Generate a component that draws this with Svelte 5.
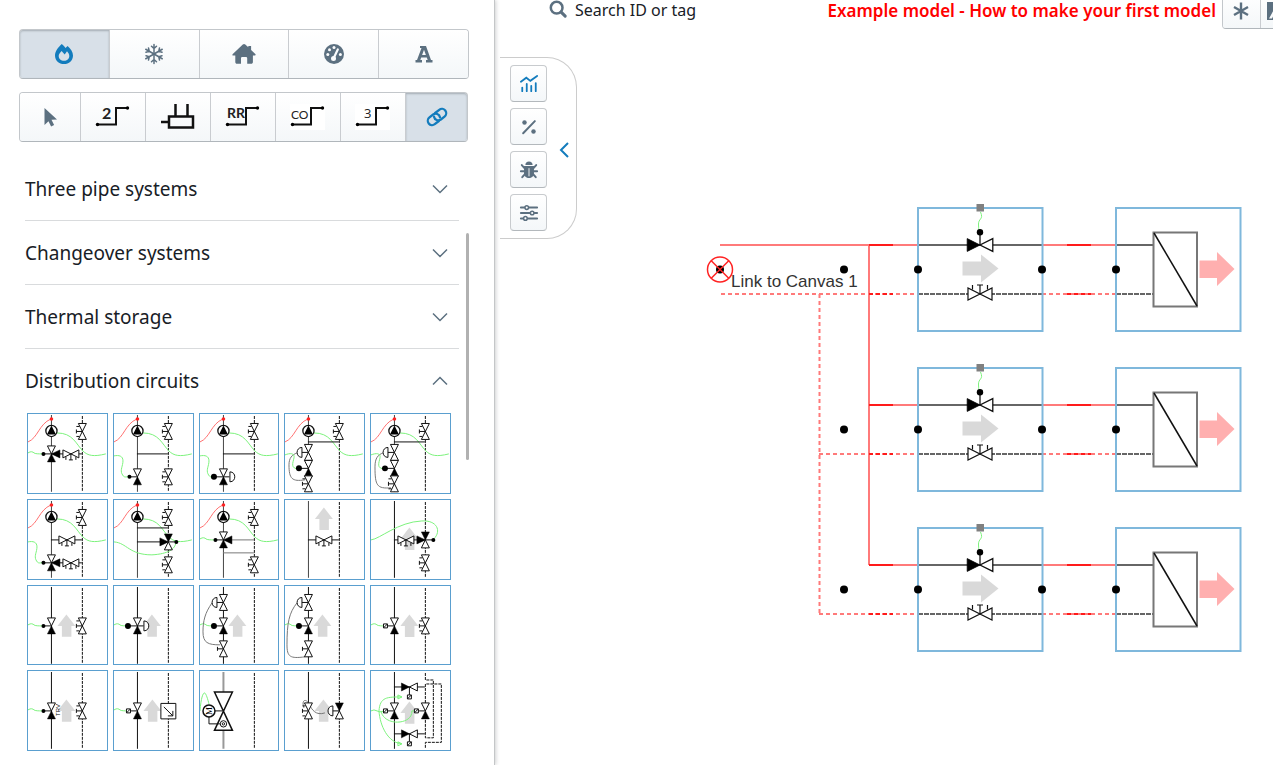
<script>
  const modes = ['heating', 'cooling', 'building', 'gauges', 'text'];
  const tools = ['select', 'two', 'unit', 'rr', 'co', 'three', 'link'];
  const checks = ['chart', 'percent', 'bug', 'sliders'];
  const groups = ['Three pipe systems', 'Changeover systems', 'Thermal storage'];

  let mode = $state('heating');
  let tool = $state('link');
  let check = $state('chart');
  let search = $state('');

  const rows = [208, 368, 528];

  // Pipe positions inside a circuit thumbnail
  const P = 24.5;
  const R = 55.5;

  const bal = (x, y, r = -90) => ({ t: 'bal', x, y, r });
  const valve = (x, y, opts = {}) => ({ t: 'valve', x, y, r: -90, a: true, ...opts });
  const line = (d, c = 'ink') => ({ t: 'path', d, c });
  const arrow = (x, y) => ({ t: 'arrow', x, y });

  const waveIn = line('M1 40c3-2 5-1 6 0s5 1 8 1', 'signal');
  const sweepIn = line('M1 43c5-1 9 0 9 5s-3 9-1 13 3 3 6 3', 'signal');
  const pump = { t: 'pump' };

  const tiles = [
    [pump, line('M24 41H55'), waveIn, valve(P, 41, { act: 'dot', third: true }), bal(44, 41, 180), bal(R, 18.5)],
    [pump, line('M24 41H55'), sweepIn, valve(P, 64, { act: 'dot' }), bal(R, 18.5), bal(R, 64)],
    [pump, line('M24 41H55'), sweepIn, valve(P, 64, { act: 'big', back: true }), bal(R, 18.5)],
    [pump, line('M24 29H55'), line('M13 40C8 42 5 45 5 52C5 66 8 69 21 67', 'thin'), line('M1 42c5-2 10-2 9 3s-4 11 5 11', 'signal'),
      valve(P, 39.5, { a: false, act: 'dome' }), valve(P, 55.5, { act: 'big' }), bal(P, 71), bal(R, 18.5)],
    [pump, line('M24 29H55'), line('M13 40C8 42 5 45 5 54C5 73 7 76 21 75', 'thin'), line('M1 42c5-2 10-2 9 3s-4 11 5 11', 'signal'),
      valve(P, 39.5, { a: false, act: 'dome' }), valve(P, 55.5, { act: 'big' }), bal(P, 71), bal(R, 18.5)],

    [pump, line('M24 41H55M24 64H55'), sweepIn, bal(40, 41, 180), valve(P, 64, { act: 'dot', third: true }), bal(44, 64, 180), bal(R, 18.5)],
    [pump, line('M24 29H55M24 43H55'), line('M1 43C14 44 16 56 39 56C56 55 62 50 63 44', 'signal'), bal(R, 18.5),
      valve(R, 43, { r: 90, act: 'dot', third: true }), bal(R, 66)],
    [pump, line('M24 41H55M24 54H55', 'thin'), waveIn, valve(P, 41, { act: 'dot', third: true }), bal(R, 18.5), bal(R, 66)],
    [arrow(40, 20), line('M24 41H55'), bal(40, 41, 180)],
    [arrow(39.5, 40), line('M24 41H55'), line('M1 41C10 40 28 23 52 22C67 21 72 32 64 40', 'signal'), bal(36, 41, 180),
      valve(R, 41, { r: 90, act: 'dot', third: true }), bal(R, 64)],

    [arrow(39.5, 41), waveIn, valve(P, 41, { act: 'dot' }), bal(R, 41)],
    [arrow(39, 41), waveIn, valve(P, 41, { act: 'big', back: true })],
    [arrow(38.5, 41), waveIn, line('M13 18C6 28 4 36 4 47C4 58 9 60 21 60', 'thin'), valve(P, 17.5, { a: false, act: 'dome' }),
      valve(P, 41, { act: 'big' }), { t: 'hand', x: P, y: 64 }],
    [arrow(38.5, 41), waveIn, line('M13 18C5 28 3 38 3 60C3 72 6 74 21 72', 'thin'), valve(P, 17.5, { a: false, act: 'dome' }),
      valve(P, 41, { act: 'big' }), { t: 'hand', x: P, y: 64 }],
    [arrow(39.5, 41), waveIn, valve(P, 41, { act: 'sq' }), bal(R, 41)],

    [arrow(39.5, 41), waveIn, valve(P, 41, { act: 'dot' }), { t: 'trv' }, bal(R, 41)],
    [arrow(39.5, 41), waveIn, valve(P, 41, { act: 'sq' }), { t: 'meter' }],
    [{ t: 'motor' }],
    [arrow(39.5, 41), line('M20 38C17 30 22 28 25 34C28 40 32 46 41 43', 'thin'), bal(P, 41),
      valve(R, 41, { a: false, b: true, act: 'dome' })],
    [arrow(39.5, 43), { t: 'loops' }, line('M24 17H55M24 64H55'),
      line('M1 41l3 -1 6 2 5-1M9 41C10 27 17 27 32 27M9 41C10 56 18 73 32 74M11 41C14 57 43 55 42 41h4', 'signal'),
      line('M28 25v4l4-2zM28 72v4l4-2z', 'signal'),
      valve(P, 41, { act: 'sq' }), valve(R, 41, { act: 'sq' }),
      valve(39.5, 17, { r: 0, under: true }), valve(39.5, 64, { r: 0, under: true })]
  ];
</script>

{#snippet icon(name)}
  <svg class="icon {name}" viewBox="0 0 20 20" aria-hidden="true">
    {#if name === 'heating'}
      <path class="solid" fill-rule="evenodd" d="M7.800 0C9.400 1.200 10.600 2.500 11.600 4c.6-.9 1.200-1.500 2-2.100C16.800 4.600 19 8 19 11.400 19 16.500 15 20 10 20S1 16.500 1 11.400C1 7.600 4 3.400 7.800 0zM7.600 7C5.600 9 4.700 10.500 4.700 12c0 2.900 2.300 4.800 5.300 4.800s5.300-1.900 5.300-4.800c0-1.700-.9-3.200-2.300-4.800L10.700 10.600z" />
    {:else if name === 'cooling'}
      <g class="line" stroke-width="1.500">
        {#each [0, 60, 120, 180, 240, 300] as a}
          <path transform="rotate({a} 10 10)" d="M10 10V.5M7.500 2.200l2.500 2.300 2.500-2.300" />
        {/each}
      </g>
    {:else if name === 'building'}
      <path class="solid" d="M-1.300 11.500c-.5-.5-.4-1 .1-1.500L8.800.4c.8-.7 1.700-.7 2.500 0l3 2.900V2h2.800v4L21.300 10c.5.500.5 1.500-.4 1.500h-2V18c0 1.200-.6 1.800-1.800 1.800h-3.900v-5.300c0-1-.4-1.500-1.300-1.500H8.300C7.400 13 7 13.500 7 14.500v5.300H3.100c-1.200 0-1.800-.6-1.800-1.800v-6.500z" />
    {:else if name === 'gauges'}
      <circle class="solid" cx="10" cy="10" r="10" />
      <g fill="#fbfcfd">
        <circle cx="3.800" cy="10.500" r="1.500" /><circle cx="5.500" cy="5.800" r="1.500" />
        <circle cx="10" cy="3.600" r="1.500" /><circle cx="16.400" cy="10.500" r="1.500" />
        <circle cx="9.500" cy="14.500" r="2.500" />
      </g>
      <path d="M9.500 14.500l4.300-9" fill="none" stroke="#fbfcfd" stroke-width="2.200" stroke-linecap="round" />
    {:else if name === 'text'}
      <path class="solid" fill-rule="evenodd" d="M6 2H12L17 16H18.500V18.500H12V16H13.700L12.800 13.500H7.200L6.300 16H8V18.500H1.500V16H3L7.500 4H6zM10 5.800L8.100 11H11.900z" />
    {:else if name === 'select'}
      <path class="solid" d="M4.500 1v17l4-3.800 2.600 5.300 3-1.500-2.600-5.200 5.500-.3z" />
    {:else if name === 'link'}
      <g class="line" stroke-width="2.300" transform="rotate(-38 10 10)">
        <path d="M9 14.300H3.800a4.300 4.300 0 0 1 0-8.600H8.500a4.300 4.300 0 0 1 3.700 6.300" />
        <path d="M11 5.700H16.200a4.300 4.300 0 0 1 0 8.600H11.500a4.300 4.300 0 0 1-3.700-6.300" />
      </g>
    {:else if name === 'chart'}
      <g class="line" stroke-width="2">
        <path d="M1 7.500L7 3l4.500 3.500L19 1" />
        <path d="M2.500 18V14M7.500 18V10M12.500 18V12M17.500 18V9" />
      </g>
    {:else if name === 'percent'}
      <path class="line" d="M3.500 17L16.500 3.500" stroke-width="2.200" />
      <circle class="solid" cx="5" cy="5" r="2.500" /><circle class="solid" cx="15" cy="15" r="2.500" />
    {:else if name === 'bug'}
      <path class="solid" d="M6 4.500C6 2 7.500.5 10 .5S14 2 14 4.500zM4.500 5.500h11V14c0 3-2.500 5-5.500 5s-5.500-2-5.500-5z" />
      <path class="line" d="M5 8L2 4.500M15 8l3-3.500M5 11.500H1M15 11.500h4M5.500 14.500L2.500 18M14.500 14.500l3 3.500" stroke-width="2.200" />
      <path d="M10 8v9" stroke="#fff" stroke-width="1" />
    {:else if name === 'sliders'}
      <path class="line" d="M1 4H19M1 10H19M1 16H19" stroke-width="2.200" />
      <g class="line knobs" stroke-width="1.700">
        <circle cx="7.500" cy="4" r="2" /><circle cx="13.500" cy="10" r="2" /><circle cx="6" cy="16" r="2" />
      </g>
    {:else if name === 'asterisk'}
      <path class="line thin-caps" d="M10 1.500V18.500M3 6l14 8M17 6L3 14" stroke-width="2.400" />
    {:else if name === 'image'}
      <path class="solid" fill-rule="evenodd" d="M-2 1h24v18H-2zM0 17.500h3L9 5H7z" />
    {:else if name === 'search'}
      <circle class="line" cx="8.500" cy="8.500" r="6.500" stroke-width="2.800" />
      <path class="line" d="M13.500 13.500L18 18" stroke-width="3.400" />
    {/if}
  </svg>
{/snippet}

{#snippet pipeIcon(name)}
  <svg class="pipe-icon" viewBox="0 0 36 26" aria-hidden="true">
    {#if name === 'unit'}
      <path d="M15.500 0V12M27.500 0V12M1 18H9M9 12.500H33V23.500H9Z" fill="none" stroke="#111" stroke-width="2.500" />
    {:else}
      {#if name === 'co' || name === 'three'}<rect x="0" y="0" width="35" height="26" fill="#fff" />{/if}
      <path d="M2 20.500H21V4H33" fill="none" stroke="#111" stroke-width="2" />
      <circle cx="2.500" cy="20.500" r="1.700" /><circle cx="32.500" cy="4" r="1.700" />
      {#if name === 'two'}<text x="7" y="15" class="bold">2</text>{/if}
      {#if name === 'rr'}<text x="2" y="14" class="bold rr">RR</text>{/if}
      {#if name === 'co'}<text x="1" y="15" class="co">CO</text>{/if}
      {#if name === 'three'}<text x="9" y="14">3</text>{/if}
    {/if}
  </svg>
{/snippet}

<!-- Symbols are drawn horizontally and rotated onto their pipe -->
{#snippet balSymbol()}
  <path class="body" d="M-8 -4V4L8 -4V4Z" />
  <path class="ink" d="M0 0V-6M-2 -6H2M-5 -6V-3M5 -6V-3" />
{/snippet}

{#snippet valveSymbol(s)}
  <path class={s.a ? 'full' : 'body'} d="M-8 -4V4L0 0Z" />
  <path class={s.b ? 'full' : 'body'} d="M8 -4V4L0 0Z" />
  {#if s.third}<path class="full" d="M-4 8.500H4L0 0Z" />{/if}
  {#if s.act}<path class="ink" d="M0 0V-8" />{/if}
  {#if s.act === 'dot'}<circle cx="0" cy="-8" r="2" />{/if}
  {#if s.act === 'big'}<circle cx="0" cy="-9.500" r="3" />{/if}
  {#if s.act === 'sq'}<path class="body" d="M-2 -11H2V-7H-2ZM-2 -11L2 -7" />{/if}
  {#if s.act === 'dome'}<path class="body" d="M-5 -6.500H5C5 -13 -5 -13 -5 -6.500Z" />{/if}
  {#if s.back}<path class="body" d="M-5 6.500H5C5 13 -5 13 -5 6.500Z" /><path class="ink" d="M0 0V6" />{/if}
  {#if s.under}<path class="ink" d="M0 0V8" /><path class="body" d="M-2 8H2V12H-2ZM-2 12L2 8" />{/if}
{/snippet}

{#snippet thumb(parts, i)}
  <svg class="thumb" viewBox="1 1 79 79" aria-hidden="true">
    {#if i !== 17}<path class="ink" class:soft={i < 9} d="M{P} 2V79" />{/if}
    {#if i < 19}<path class="ink dash" d="M{R} 3V79" />{/if}
    {#each parts as s}
      {#if s.t === 'path'}
        <path class={s.c} d={s.d} />
      {:else if s.t === 'bal'}
        <g transform="translate({s.x} {s.y}) rotate({s.r})">{@render balSymbol()}</g>
      {:else if s.t === 'valve'}
        <g transform="translate({s.x} {s.y}) rotate({s.r})">{@render valveSymbol(s)}</g>
      {:else if s.t === 'hand'}
        <g transform="translate({s.x} {s.y}) rotate(-90)">
          <path class="body" d="M-8 -4V4L8 -4V4Z" /><path class="ink" d="M0 0V-6M-2 -6H2" />
        </g>
      {:else if s.t === 'arrow'}
        <path class="flow" transform="translate({s.x} {s.y})" d="M0 -11.500L9 0H5V11H-4.500V0H-9Z" />
      {:else if s.t === 'pump'}
        <path class="hot" d="M1 29C11 25 12 11 24 6" />
        <path class="signal" d="M30 20C46 20 49 31 56 38C61 43 67 44 79 41" />
        <circle class="hot-dot" cx={P} cy="6" r="1.800" />
        <circle class="pump" cx={P} cy="18" r="5.600" />
        <path d="M24.500 12.500L29 21.500H20Z" />
      {:else if s.t === 'trv'}
        <text class="trv" transform="translate(33 46) rotate(-90)">TRV</text>
      {:else if s.t === 'meter'}
        <path class="body" d="M48 33.500H63V49H48Z" />
        <path class="ink" d="M51 37L60 46M60 41V46H55" />
      {:else if s.t === 'motor'}
        <path class="soft-pipe" d="M24.500 2V22M24.500 60V79" />
        <path class="signal" d="M1 41C2 28 4 23 5.500 23S9 30 10 34" />
        <path class="body thick" d="M15.500 22H33.500L15.500 60.500H33.500Z" />
        <path class="ink" d="M10 41H24M10 47V54H21" />
        <circle class="body thick" cx="10" cy="41" r="6" />
        <circle class="body" cx="24.500" cy="54" r="3.200" />
        <circle class="body" cx="24.500" cy="54" r="1.200" />
        <text class="motor" transform="translate(13 45) rotate(-90)">M</text>
      {:else if s.t === 'loops'}
        <path class="ink dash" d="M{R} 3V10H63.500V68H{R}V14H71.500V72.500H{R}V79" />
      {/if}
    {/each}
  </svg>
{/snippet}

{#snippet chevron(up)}
  <svg class="chevron" viewBox="0 0 16 10" aria-hidden="true">
    <path d={up ? 'M1 8.500L8 1.500L15 8.500' : 'M1 1.500L8 8.500L15 1.500'} />
  </svg>
{/snippet}

<div class="app">
  <aside class="sidebar">
    <div class="btn-group">
      {#each modes as m}
        <button aria-label={m} class:active={mode === m} onclick={() => (mode = m)}>{@render icon(m)}</button>
      {/each}
    </div>
    <div class="btn-group tools">
      {#each tools as t}
        <button aria-label={t} class:active={tool === t} onclick={() => (tool = t)}>
          {#if t === 'select' || t === 'link'}{@render icon(t)}{:else}{@render pipeIcon(t)}{/if}
        </button>
      {/each}
    </div>

    <div class="library">
      {#each groups as g}
        <button class="group-head" aria-expanded="false"><span>{g}</span>{@render chevron(false)}</button>
      {/each}
      <button class="group-head open" aria-expanded="true"><span>Distribution circuits</span>{@render chevron(true)}</button>
      <div class="circuits">
        {#each tiles as parts, i}
          <button class="circuit" aria-label="Distribution circuit {i + 1}">{@render thumb(parts, i)}</button>
        {/each}
      </div>
      <div class="scroll-thumb"></div>
    </div>
  </aside>

  <main>
    <!-- Model canvas -->
    <svg class="canvas" aria-label="Model canvas">
      <g transform="translate(-495 0)">
        <path class="red" d="M720 245H918M869 245V565M869 405H918M869 565H918" />
        <path class="red dotted" d="M721 294H918M819.500 294V614M819 454H918M819 614H918" />
        {#each rows as y}
          <g transform="translate(918 {y})">
            <path class="red" d="M124 37H198" />
            <path class="red dotted" d="M124 86H198" />
            <path class="red strong" d="M-49 37H-25M149 37H173" />
            <path class="red strong dotted" d="M-49 86H-25M149 86H173" />
            <path class="pipe" d="M0 37H124M198 37H235" />
            <path class="pipe return" d="M0 86H124M198 86H235" />
            <rect class="frame" x="0" y="0" width="124.500" height="123" />
            <rect class="frame" x="198" y="0" width="124.500" height="123" />
            <path class="signal" d="M62.500 4C66 12 60 10 60.500 17S60 20 62 24" />
            <rect x="58.500" y="-4" width="7.500" height="7.500" fill="#808080" />
            <g class="big-symbol" transform="translate(62 37) scale(1.600)">
              {@render valveSymbol({ a: true, act: 'dot' })}
            </g>
            <path class="flow" d="M44.500 53.500H63V46.500L80.500 60.500L63 74.500V67.500H44.500Z" />
            <g class="big-symbol" transform="translate(62 86) scale(1.500)">{@render balSymbol()}</g>
            <rect class="coil" x="235.500" y="24.500" width="43.500" height="74" />
            <path class="ink diagonal" d="M236 25L279 98" />
            <path class="heat" d="M281.500 52.500H299V44L316.500 61L299 78V70H281.500Z" />
            {#each [-74, 0, 124, 198] as x}<circle cx={x} cy="61.500" r="4" />{/each}
          </g>
        {/each}
        <circle cx="720" cy="269.500" r="4" />
        <circle class="link-mark" cx="720" cy="269.500" r="12.500" />
        <path class="link-mark" d="M711 260.500L729 278.500M729 260.500L711 278.500" />
        <text class="canvas-label" x="731" y="287">Link to Canvas 1</text>
      </g>
    </svg>

    <header>
      <label class="search">
        {@render icon('search')}
        <input type="text" placeholder="Search ID or tag" aria-label="Search ID or tag" bind:value={search} />
      </label>
      <h1>Example model - How to make your first model</h1>
      <div class="btn-group header-actions">
        <button aria-label="Simulate">{@render icon('asterisk')}</button>
        <button aria-label="Export image">{@render icon('image')}</button>
      </div>
    </header>

    <div class="panel">
      <div class="panel-buttons">
        {#each checks as c}
          <button aria-label={c} class:current={check === c} onclick={() => (check = c)}>{@render icon(c)}</button>
        {/each}
      </div>
      <button class="collapse" aria-label="Collapse panel">
        <svg viewBox="0 0 10 16" aria-hidden="true"><path d="M9 1L2 8L9 15" /></svg>
      </button>
    </div>
  </main>
</div>

<style>
  :global(body) {
    background: #fff;
  }

  .app {
    display: flex;
    height: 100vh;
    overflow: hidden;
    font-family: 'Noto Sans', 'Open Sans', sans-serif;
    color: #182026;
  }

  button {
    font: inherit;
    color: inherit;
    padding: 0;
    cursor: pointer;
  }

  /* sidebar */
  .sidebar {
    box-sizing: border-box;
    flex: 0 0 495px;
    padding: 29px 25px 0 19px;
    border-right: 1px solid #c4c6c8;
    box-shadow: 1px 0 4px rgba(16, 22, 26, 0.2);
    position: relative;
  }

  .btn-group {
    display: flex;
    box-sizing: border-box;
    border: 1px solid #c3c7cb;
    border-bottom-color: #b0b6bb;
    border-radius: 4px;
  }

  .btn-group button {
    flex: 1 1 0;
    height: 48px;
    display: flex;
    align-items: center;
    justify-content: center;
    border: 0;
    border-right: 1px solid #c9ccd0;
    background: linear-gradient(#fff, #f4f7f9);
    color: #5c7080;
  }

  .btn-group button:first-child {
    border-radius: 3px 0 0 3px;
  }

  .btn-group button:last-child {
    border-right: 0;
    border-radius: 0 3px 3px 0;
  }

  .btn-group button.active {
    background: #d8e0e8;
    color: #137cbd;
    box-shadow: inset 0 1px 2px rgba(16, 22, 26, 0.25);
  }

  .tools {
    margin: 13px 1px 15px 0;
  }

  .tools button:first-child,
  .tools button:last-child {
    flex: 0 0 61px;
  }

  .icon {
    width: 20px;
    height: 20px;
    overflow: visible;
  }

  .icon .solid {
    fill: currentColor;
  }

  .icon .line {
    fill: none;
    stroke: currentColor;
    stroke-linecap: round;
  }

  .icon .thin-caps {
    stroke-linecap: butt;
  }

  .icon .knobs {
    fill: #fff;
  }

  .pipe-icon {
    width: 36px;
    height: 26px;
  }

  .pipe-icon text {
    font-family: 'Open Sans', sans-serif;
    font-size: 13px;
    fill: #222;
  }

  .pipe-icon .bold {
    font-family: Lato, sans-serif;
    font-weight: 700;
    font-size: 16px;
  }

  .pipe-icon .rr {
    font-size: 14px;
  }

  .pipe-icon .co {
    font-family: Lato, sans-serif;
    font-size: 12px;
  }

  .library {
    position: relative;
    padding: 0 10px 0 6px;
  }

  .group-head {
    width: 100%;
    height: 64px;
    display: flex;
    align-items: center;
    justify-content: space-between;
    border: 0;
    border-bottom: 1px solid #d9dbdd;
    padding-right: 11px;
    background: none;
    font-size: 19px;
  }

  .group-head.open {
    border-bottom: 0;
  }

  .chevron {
    width: 16px;
    height: 10px;
  }

  .chevron path {
    fill: none;
    stroke: #5c7080;
    stroke-width: 1.5;
  }

  .circuits {
    display: grid;
    grid-template-columns: repeat(5, 1fr);
    gap: 5px;
    padding: 0 8px 0 2px;
  }

  .circuit {
    aspect-ratio: 1;
    border: 1px solid #5a9fcf;
    background: #fff;
    min-width: 0;
  }

  .thumb {
    display: block;
    width: 100%;
    height: 100%;
  }

  .scroll-thumb {
    position: absolute;
    top: 76px;
    right: 0;
    width: 3px;
    height: 227px;
    border-radius: 2px;
    background: #b1b1b1;
  }

  /* schematic symbols */
  .ink,
  .body,
  .pipe {
    stroke: #111;
    stroke-width: 1;
    fill: none;
  }

  .body {
    fill: #fff;
  }

  .thick {
    stroke-width: 1.5;
  }

  .full {
    fill: #000;
    stroke: #000;
    stroke-width: 0.5;
  }

  .soft {
    stroke: #444;
  }

  .soft-pipe {
    stroke: #999;
    stroke-width: 2;
  }

  .dash {
    stroke-dasharray: 3 1;
  }

  .thin {
    fill: none;
    stroke: #777;
    stroke-width: 1;
  }

  .signal {
    fill: none;
    stroke: #7cf27c;
    stroke-width: 1;
  }

  .hot {
    fill: none;
    stroke: #ff7070;
    stroke-width: 1;
  }

  .hot-dot {
    fill: #f22;
  }

  .pump {
    fill: #fff;
    stroke: #111;
    stroke-width: 1.3;
  }

  .flow {
    fill: #b4b4b4;
    fill-opacity: 0.5;
  }

  .trv {
    font: 6px 'Liberation Sans', sans-serif;
  }

  .motor {
    font: 9px 'Liberation Serif', serif;
  }

  /* canvas */
  main {
    position: relative;
    flex: 1;
    min-width: 0;
  }

  .canvas {
    position: absolute;
    inset: 0;
    width: 100%;
    height: 100%;
  }

  .red {
    fill: none;
    stroke: #ff7a7a;
    stroke-width: 2;
  }

  .strong {
    stroke: #ff1a1a;
  }

  .dotted {
    stroke-dasharray: 4 3;
  }

  .pipe {
    stroke: #666;
    stroke-width: 2;
  }

  .return {
    stroke-dasharray: 5 1;
  }

  .frame {
    fill: none;
    stroke: #7fb8dc;
    stroke-width: 2;
  }

  .big-symbol :is(.body, .ink) {
    stroke-width: 0.8;
  }

  .coil {
    fill: #fff;
    stroke: #777;
    stroke-width: 2;
  }

  .diagonal {
    stroke-width: 1.5;
  }

  .heat {
    fill: #ffafaf;
  }

  .link-mark {
    fill: none;
    stroke: #f22;
    stroke-width: 1.5;
  }

  .canvas-label {
    font: 17px 'Liberation Sans', Arial, sans-serif;
    fill: #333;
  }

  header {
    position: relative;
    display: flex;
    align-items: center;
    height: 22px;
    padding-left: 54px;
  }

  .search {
    display: flex;
    align-items: center;
    gap: 8px;
    height: 20px;
    margin-bottom: 2px;
    color: #5c7080;
  }

  .search .icon {
    width: 18px;
    height: 18px;
  }

  .search input {
    width: 180px;
    padding: 0;
    border: 0;
    outline: 0;
    background: none;
    font: inherit;
    font-size: 16px;
    color: #182026;
  }

  .search input::placeholder {
    color: #182026;
    opacity: 1;
  }

  h1 {
    margin: 0 6px 2px auto;
    font-size: 17px;
    font-weight: 600;
    color: #f00;
    white-space: nowrap;
  }

  .header-actions {
    flex: 0 0 76px;
    margin-right: -25px;
  }

  .header-actions button {
    height: 34px;
  }

  .panel {
    position: relative;
    display: flex;
    width: fit-content;
    margin: 35px 0 0 5px;
    padding: 7px 5px 7px 10px;
    border: 1px solid #ccc;
    border-left: 0;
    border-radius: 0 30px 30px 0;
  }

  .panel-buttons {
    display: flex;
    flex-direction: column;
    gap: 6px;
  }

  .panel-buttons button {
    width: 37px;
    height: 37px;
    display: flex;
    align-items: center;
    justify-content: center;
    border: 1px solid #c8cbce;
    border-bottom-color: #b3b8bc;
    border-radius: 4px;
    background: linear-gradient(#fff, #f4f7f9);
    color: #5c7080;
  }

  .panel-buttons button.current {
    color: #137cbd;
  }

  .panel-buttons .icon {
    width: 18px;
    height: 18px;
  }

  .collapse {
    width: 24px;
    display: flex;
    align-items: center;
    justify-content: center;
    border: 0;
    padding-top: 4px;
    background: none;
  }

  .collapse svg {
    width: 10px;
    height: 16px;
    margin-left: 10px;
  }

  .collapse path {
    fill: none;
    stroke: #137cbd;
    stroke-width: 2;
  }
</style>
